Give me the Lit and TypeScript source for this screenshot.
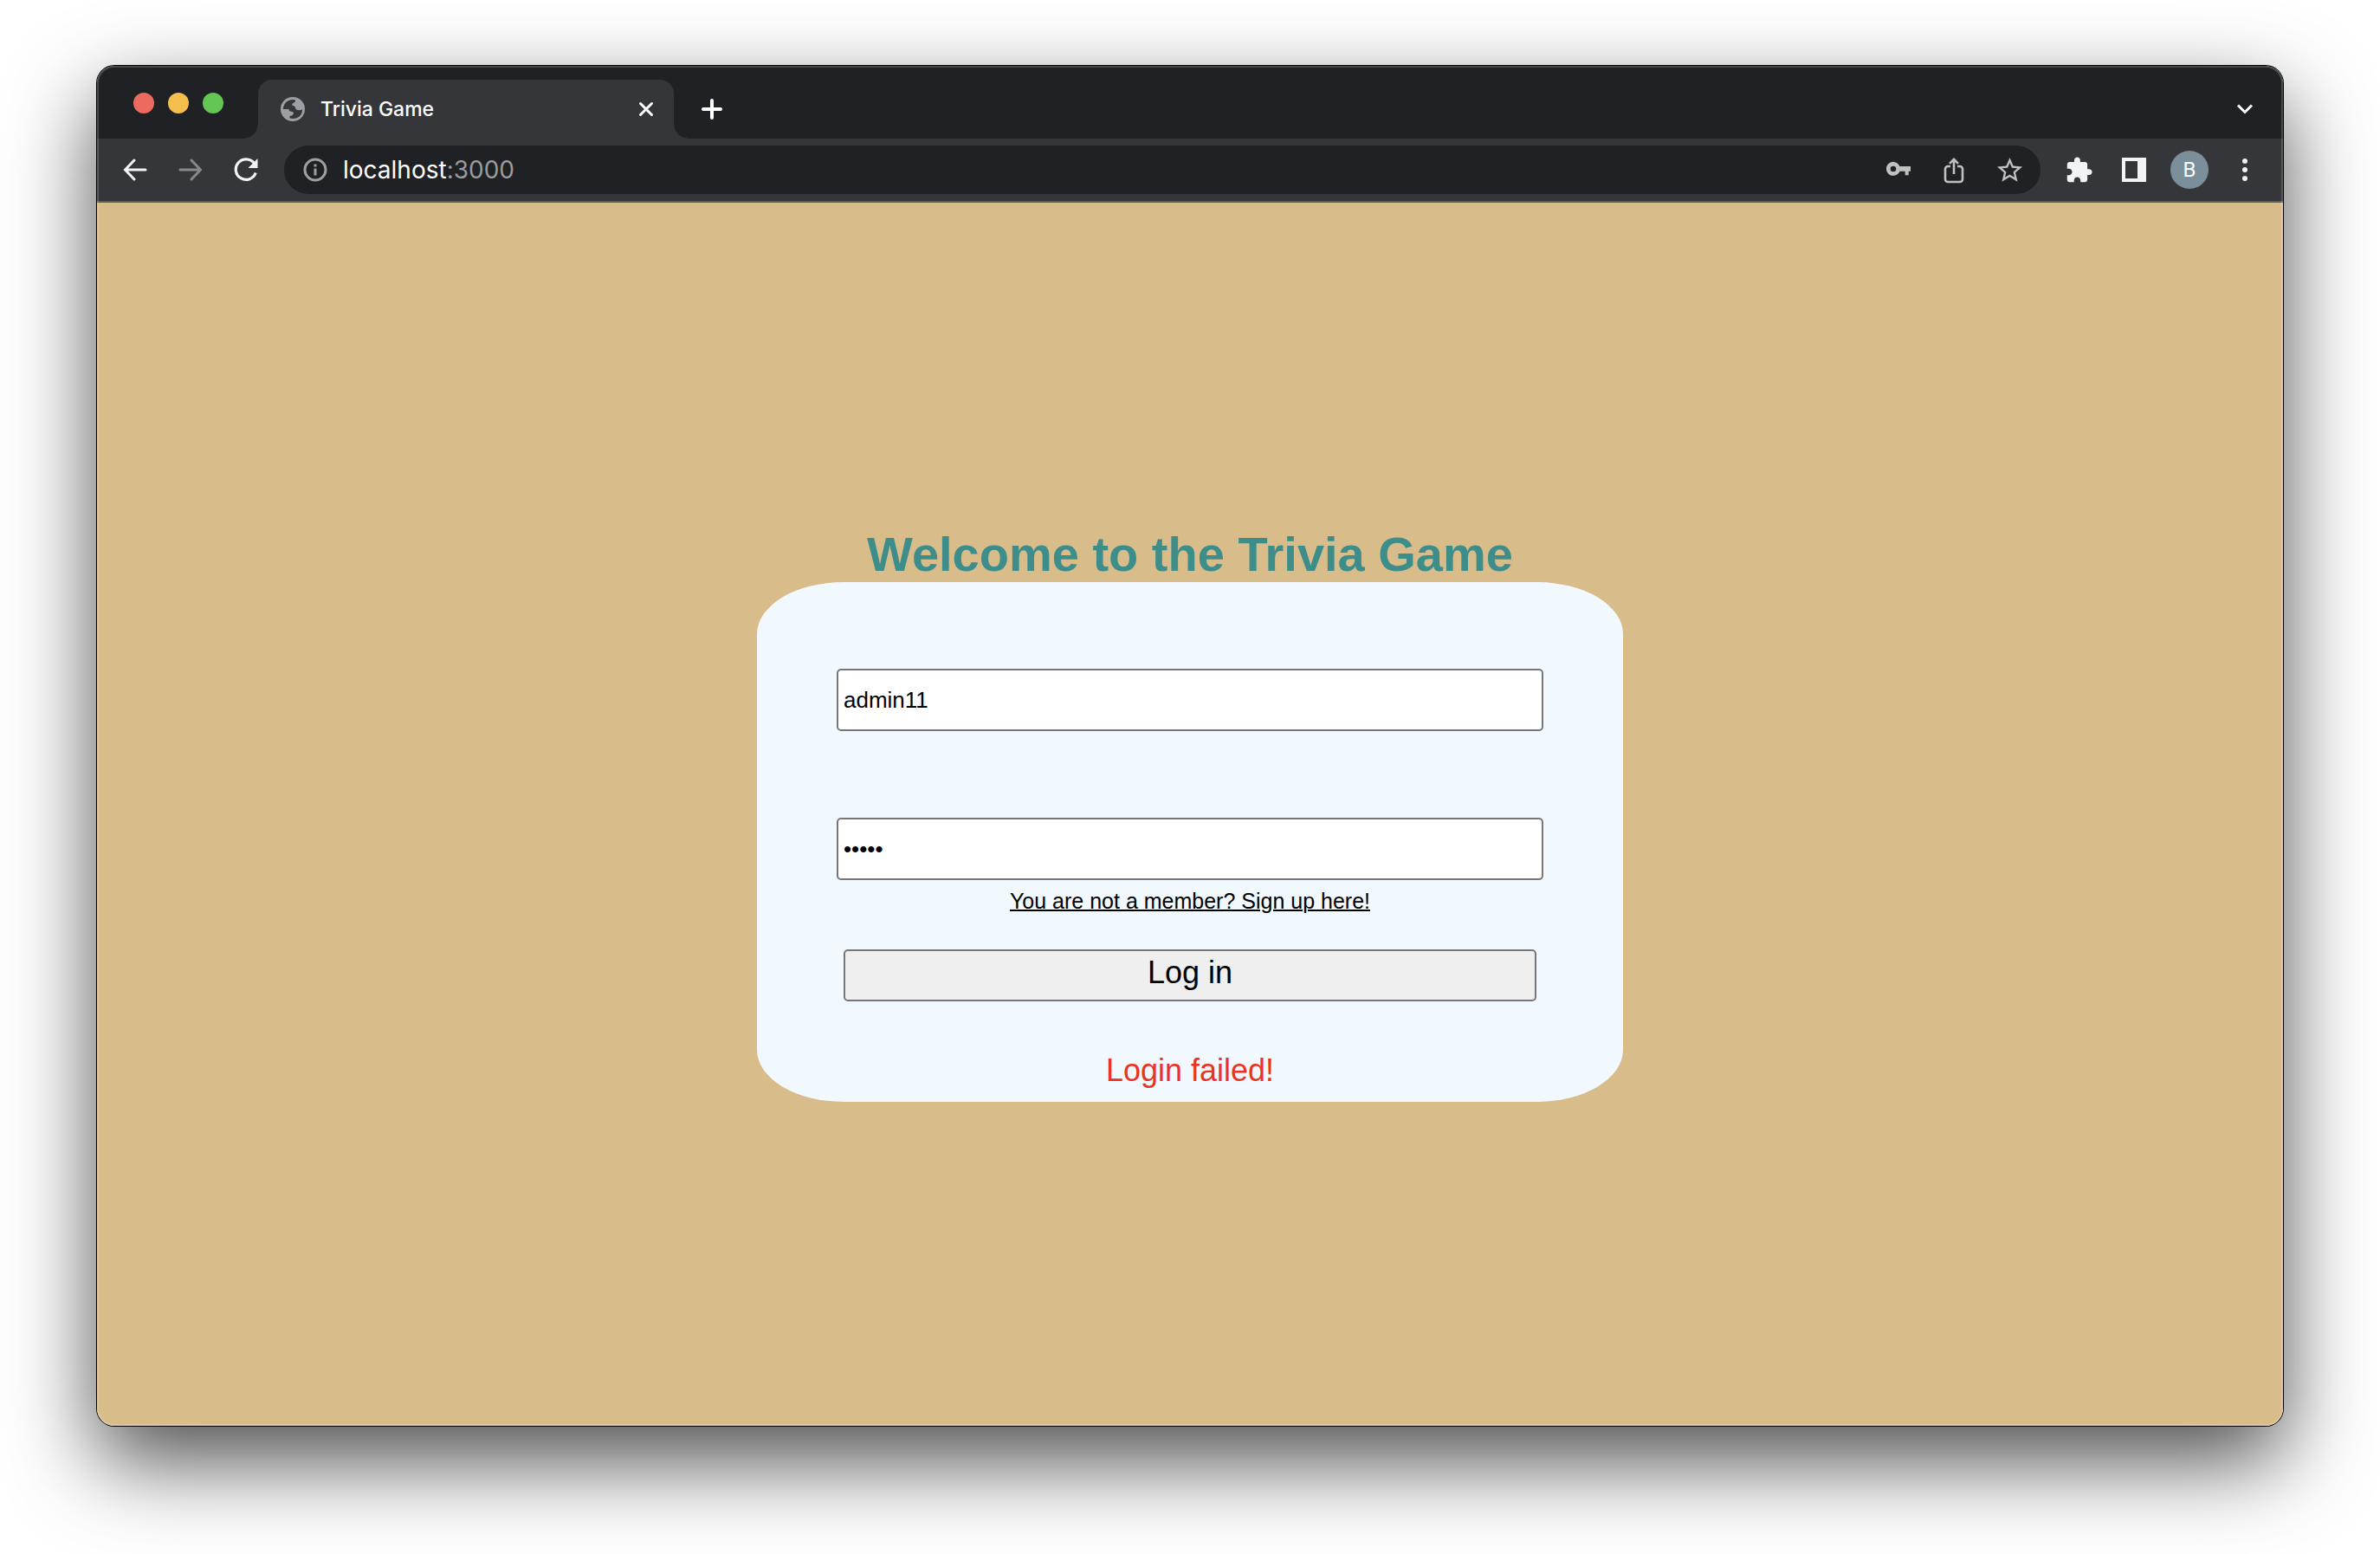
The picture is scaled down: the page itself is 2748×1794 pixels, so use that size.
import { LitElement, html, css, svg } from "lit";
import { customElement, state } from "lit/decorators.js";

const icon = (size: number, body: unknown) => html`
  <svg width=${size} height=${size} viewBox="0 0 ${size} ${size}" fill="none" aria-hidden="true">${body}</svg>`;

const icons = {
  globe: icon(28, svg`
    <circle cx="14" cy="14" r="14" fill="#9aa0a6"/>
    <path fill="#35363a" d="M2.900 14Q3 7 9.500 3.900Q13 2.600 16.500 3.200Q18 4.800 15.500 6.500Q12.800 7 13.500 9.800Q16.500 9.800 17 12.500Q17.500 15 20 15Q23.500 15.500 25 14.200Q25.200 21.500 18 24.600Q14 25.500 10.500 24.600V21.800Q14 22 15 19Q15 17 12 16.800Q9.500 16.500 9.500 14Z"/>`),
  back: icon(28, svg`<path d="M13 3 2.500 14 13 25M3 14h23" stroke="#f1f3f4" stroke-width="3" stroke-linecap="round"/>`),
  forward: icon(28, svg`<path d="m15 3 10.500 11L15 25M25 14H2" stroke="#86888a" stroke-width="3" stroke-linecap="round"/>`),
  reload: icon(28, svg`
    <path d="M23.500 6.500A11.800 11.800 0 1 0 25.200 17.500" stroke="#f1f3f4" stroke-width="3.200"/>
    <path d="M27.500 1v11h-11z" fill="#f1f3f4"/>`),
  info: icon(28, svg`
    <circle cx="14" cy="14" r="12" stroke="#9aa0a6" stroke-width="3"/>
    <path d="M14 12.500v8M14 7.500v3" stroke="#9aa0a6" stroke-width="3"/>`),
  close: icon(20, svg`<path d="m3.500 3.500 13 13m0-13-13 13" stroke="#fff" stroke-width="3" stroke-linecap="round"/>`),
  plus: icon(28, svg`<path d="M4 14h20M14 4v20" stroke="#fff" stroke-width="4" stroke-linecap="round"/>`),
  chevron: icon(20, svg`<path d="m2 5.500 8 8 8-8" stroke="#fff" stroke-width="3"/>`),
  key: icon(28, svg`
    <path fill="#c0c0c0" fill-rule="evenodd" d="M15.400 10A8 8 0 1 0 15.400 15.700H21.700V20.300h4V15.700H28V10zM8 16.300a3.300 3.300 0 1 1 0-6.600 3.300 3.300 0 0 1 0 6.600z"/>`),
  share: icon(32, svg`
    <path d="M12 12H9a3 3 0 0 0-3 3v12a3 3 0 0 0 3 3h14a3 3 0 0 0 3-3V15a3 3 0 0 0-3-3h-3M16 21V4M11 8.800l5-5 5 5" stroke="#c0c0c0" stroke-width="2.600"/>`),
  star: html`
    <svg width="35" height="35" viewBox="0 0 24 24" fill="#c0c0c0" aria-hidden="true">
      <path d="M22 9.240l-7.190-.62L12 2 9.190 8.630 2 9.240l5.460 4.730L5.820 21 12 17.270 18.180 21l-1.630-7.030L22 9.240zM12 15.400l-3.760 2.270 1-4.280-3.320-2.880 4.380-.38L12 6.100l1.710 4.040 4.380.38-3.320 2.880 1 4.280L12 15.400z"/>
    </svg>`,
  puzzle: html`
    <svg width="33" height="33" viewBox="0 0 24 24" fill="#f1f3f4" aria-hidden="true">
      <path d="M20.500 11H19V7c0-1.100-.9-2-2-2h-4V3.500C13 2.120 11.880 1 10.500 1S8 2.120 8 3.500V5H4c-1.100 0-1.990.9-1.990 2v3.800H3.500c1.490 0 2.700 1.210 2.700 2.700s-1.210 2.700-2.700 2.700H2V20c0 1.100.9 2 2 2h3.800v-1.500c0-1.490 1.210-2.700 2.700-2.700 1.490 0 2.700 1.210 2.700 2.700V22H17c1.100 0 2-.9 2-2v-4h1.500c1.380 0 2.500-1.120 2.500-2.500S21.880 11 20.500 11z"/>
    </svg>`,
  panel: icon(28, svg`<path fill="#f1f3f4" fill-rule="evenodd" d="M0 0h28v28H0zM4 4v20h14V4z"/>`),
  more: icon(28, svg`<g fill="#f1f3f4"><circle cx="14" cy="4" r="3"/><circle cx="14" cy="14" r="3"/><circle cx="14" cy="24" r="3"/></g>`),
};

@customElement("browser-window")
export class BrowserWindow extends LitElement {
  static styles = css`
    :host {
      flex: 1;
      display: flex;
      flex-direction: column;
      position: relative;
      border-radius: 20px;
      overflow: hidden;
      font-family: Inter, "Liberation Sans", sans-serif;
      box-shadow: 0 0 0 1px #000, 0 40px 100px rgba(0, 0, 0, 0.7);
    }
    :host::after {
      content: "";
      position: absolute;
      inset: 0;
      border-radius: 20px;
      box-shadow: inset 0 0 0 2px rgba(255, 255, 255, 0.18);
      pointer-events: none;
    }
    svg { display: block; }
    button {
      display: grid;
      place-items: center;
      border: 0;
      padding: 0;
      background: none;
      font: inherit;
    }
    .strip {
      display: flex;
      align-items: flex-end;
      height: 84px;
      background: #202124;
    }
    .lights {
      display: flex;
      align-self: center;
      gap: 16px;
      padding: 2px 40px 0 42px;
    }
    .light { width: 24px; height: 24px; border-radius: 50%; }
    .red { background: #ed6a5e; }
    .yellow { background: #f5bf4f; }
    .green { background: #62c554; }
    .tab {
      position: relative;
      display: flex;
      align-items: center;
      box-sizing: border-box;
      width: 480px;
      height: 68px;
      padding: 0 22px 0 26px;
      border-radius: 16px 16px 0 0;
      background: #35363a;
      color: #fff;
      font-size: 23px;
      font-weight: 500;
    }
    .tab::before,
    .tab::after {
      content: "";
      position: absolute;
      bottom: 0;
      width: 16px;
      height: 16px;
    }
    .tab::before {
      right: 100%;
      background: radial-gradient(circle at 0 0, #202124 15px, #35363a 16px);
    }
    .tab::after {
      left: 100%;
      background: radial-gradient(circle at 100% 0, #202124 15px, #35363a 16px);
    }
    .title { flex: 1; padding-left: 18px; }
    .new-tab { width: 40px; height: 68px; margin-left: 24px; }
    .tab-search { width: 40px; height: 68px; margin: 0 24px 0 auto; }
    .toolbar {
      display: flex;
      align-items: center;
      height: 72px;
      border-bottom: 2px solid #5b5c60;
      background: #35363a;
    }
    .nav { display: flex; gap: 24px; padding: 0 24px; }
    .nav button { width: 40px; height: 56px; }
    .omnibox {
      flex: 1;
      display: flex;
      align-items: center;
      height: 56px;
      padding: 0 16px 0 22px;
      border-radius: 28px;
      background: #202124;
      color: #9a9b9d;
      font-size: 28px;
    }
    .url { flex: 1; padding-left: 18px; }
    .host { color: #fff; }
    .tools { display: flex; gap: 24px; }
    .tools button { width: 40px; height: 56px; }
    .actions { padding: 0 24px; }
    .actions .avatar {
      align-self: center;
      width: 44px;
      height: 44px;
      margin: 0 -2px;
      border-radius: 50%;
      background: #7b8f9b;
      color: #fff;
      font-family: Roboto, sans-serif;
      font-size: 24px;
    }
    .page { flex: 1; display: flex; flex-direction: column; }
  `;

  render() {
    return html`
      <div class="strip">
        <div class="lights">
          <span class="light red"></span>
          <span class="light yellow"></span>
          <span class="light green"></span>
        </div>
        <div class="tab">
          ${icons.globe}
          <span class="title">Trivia Game</span>
          <button aria-label="Close tab">${icons.close}</button>
        </div>
        <button class="new-tab" aria-label="New tab">${icons.plus}</button>
        <button class="tab-search" aria-label="Search tabs">${icons.chevron}</button>
      </div>
      <div class="toolbar">
        <nav class="nav">
          <button aria-label="Back">${icons.back}</button>
          <button aria-label="Forward" disabled>${icons.forward}</button>
          <button aria-label="Reload">${icons.reload}</button>
        </nav>
        <div class="omnibox">
          ${icons.info}
          <span class="url"><span class="host">localhost</span>:3000</span>
          <div class="tools">
            <button aria-label="Passwords">${icons.key}</button>
            <button aria-label="Share">${icons.share}</button>
            <button aria-label="Bookmark">${icons.star}</button>
          </div>
        </div>
        <div class="tools actions">
          <button aria-label="Extensions">${icons.puzzle}</button>
          <button aria-label="Side panel">${icons.panel}</button>
          <button class="avatar" aria-label="Profile B">B</button>
          <button aria-label="Menu">${icons.more}</button>
        </div>
      </div>
      <div class="page"><slot></slot></div>
    `;
  }
}

@customElement("login-page")
export class LoginPage extends LitElement {
  @state() private error = "Login failed!";

  static styles = css`
    :host {
      flex: 1;
      display: flex;
      flex-direction: column;
      align-items: center;
      justify-content: center;
      background: #d8bc8a;
      font-family: "Liberation Sans", Arial, sans-serif;
    }
    .heading {
      margin: 0;
      color: #3d8d8b;
      font-size: 56px;
      line-height: 64px;
    }
    .card {
      display: flex;
      flex-direction: column;
      align-items: center;
      box-sizing: border-box;
      width: 100%;
      max-width: 1000px;
      padding: 100px 92px 16px;
      border-radius: 10%;
      background: #f1f8fe;
    }
    .field {
      box-sizing: border-box;
      width: 100%;
      height: 72px;
      padding: 2px 6px;
      border: 2px solid #767676;
      border-radius: 5px;
      background: #fff;
      color: #000;
      font-family: inherit;
      font-size: 26px;
      outline: none;
    }
    .password { margin-top: 100px; }
    .signup {
      margin-top: 8px;
      color: #000;
      font-size: 25px;
      line-height: 32px;
      text-decoration: underline;
      text-decoration-thickness: 2px;
    }
    .submit {
      align-self: stretch;
      height: 60px;
      margin: 40px 8px 0;
      padding: 0 12px 6px;
      border: 2px solid #767676;
      border-radius: 5px;
      background: #efefef;
      color: #000;
      font-family: inherit;
      font-size: 36px;
    }
    .error {
      margin: 60px 0 0;
      color: #ea3323;
      font-size: 36px;
      line-height: 40px;
    }
  `;

  private submit(event: Event) {
    event.preventDefault();
    this.error = "Login failed!";
  }

  render() {
    return html`
      <h1 class="heading">Welcome to the Trivia Game</h1>
      <form class="card" @submit=${this.submit}>
        <input class="field" type="text" aria-label="Username" .value=${"admin11"} />
        <input class="field password" type="password" aria-label="Password" .value=${"admin"} />
        <a class="signup" href="#signup">You are not a member? Sign up here!</a>
        <button class="submit" type="submit">Log in</button>
        <p class="error" role="alert">${this.error}</p>
      </form>
    `;
  }
}

@customElement("app-root")
export class AppRoot extends LitElement {
  static styles = css`
    :host {
      display: flex;
      box-sizing: border-box;
      min-height: 100vh;
      padding: 76px 112px 148px;
      overflow: hidden;
      background: #fff;
    }
  `;

  render() {
    return html`<browser-window><login-page></login-page></browser-window>`;
  }
}
